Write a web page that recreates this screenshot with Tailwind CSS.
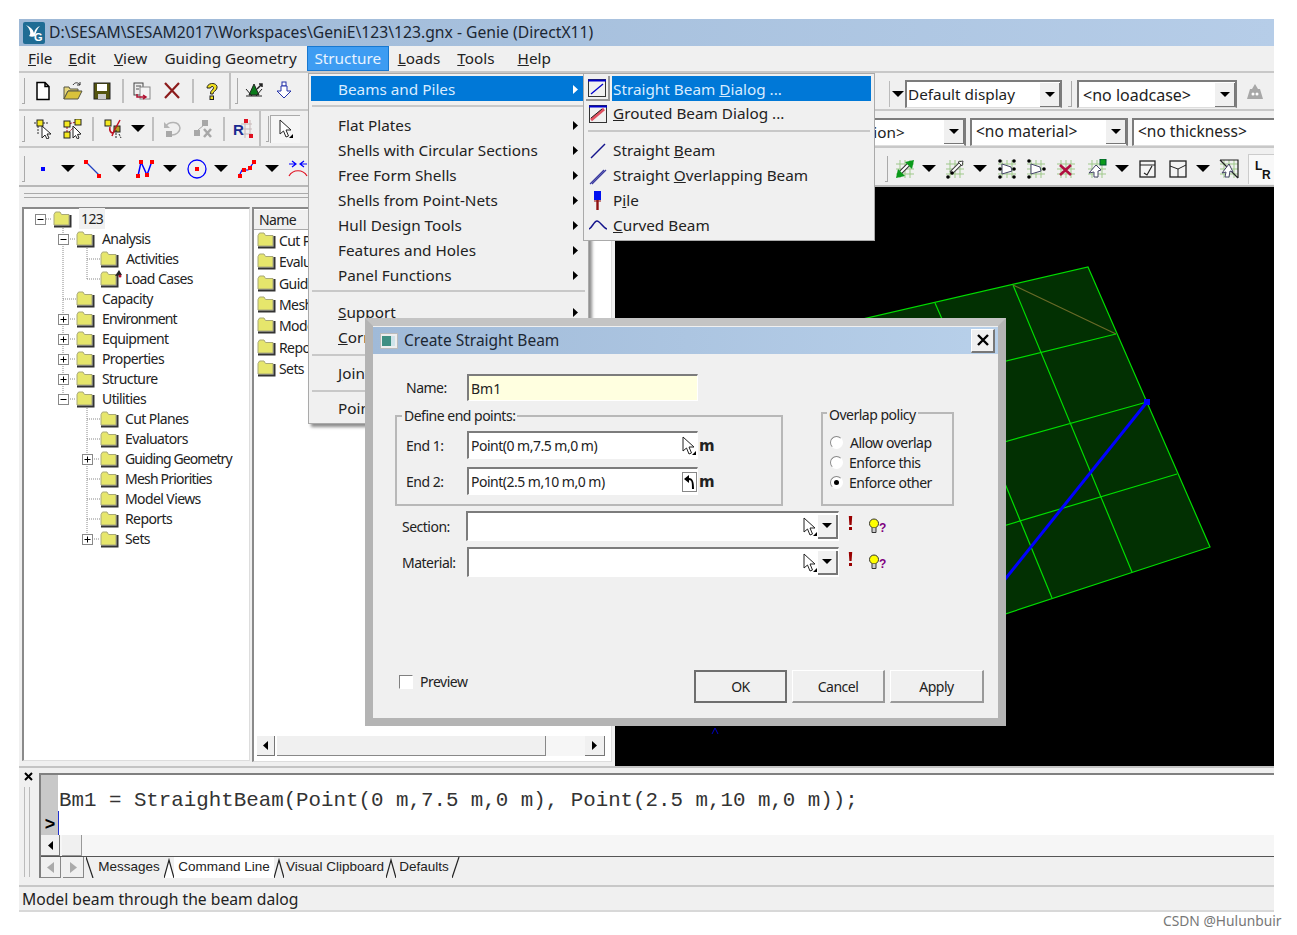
<!DOCTYPE html>
<html lang="en">
<head>
<meta charset="UTF-8">
<title>Genie</title>
<script src="https://cdn.jsdelivr.net/npm/@tailwindcss/browser@4"></script>
</head>
<body class="bg-white font-['Noto_Sans',sans-serif] text-[#222] text-[15.3px] relative h-[935px] w-[1297px] overflow-hidden">

<svg class="hidden">
  <symbol id="folder" viewBox="0 0 19 17">
    <path d="M1 3.5 2.5 1H7l1.5 2.5H16V14H1Z" fill="#e6e66c" stroke="#a8a878"/>
    <path d="M1 15.5H17.5V4" fill="none" stroke="#333" stroke-width="2"/>
  </symbol>
  <symbol id="plus" viewBox="0 0 11 11">
    <rect x=".5" y=".5" width="10" height="10" fill="#fff" stroke="#888"/>
    <path d="M2.5 5.5h6M5.5 2.5v6" stroke="#000"/>
  </symbol>
  <symbol id="minus" viewBox="0 0 11 11">
    <rect x=".5" y=".5" width="10" height="10" fill="#fff" stroke="#888"/>
    <path d="M2.5 5.5h6" stroke="#000"/>
  </symbol>
  <symbol id="dd" viewBox="0 0 14 7"><path d="M0 0H14L7 7Z" fill="#000"/></symbol>
  <symbol id="cursor" viewBox="0 0 16 20">
    <path d="M2 1V15L5.5 12 8 18 10.5 17 8 11H13Z" fill="#fff" stroke="#222"/>
    <path d="M15 15V19H11Z" fill="#000"/>
  </symbol>
  <symbol id="grid" viewBox="0 0 20 20">
    <path d="M1 5H19M1 10H19M1 15H19M5 1V19M10 1V19M15 1V19" stroke="#9fc98a"/>
  </symbol>
  <symbol id="bulb" viewBox="0 0 20 16">
    <circle cx="6" cy="5.5" r="4.5" fill="#ff0" stroke="#333"/>
    <path d="M4 10V14.5H8V10" fill="#ccc" stroke="#333"/>
    <text x="11" y="14" font-size="12" font-weight="700" fill="#800080" font-family="Liberation Sans">?</text>
  </symbol>
  <symbol id="bang" viewBox="0 0 5 15">
    <path d="M.8 0H4.2L3.6 9H1.4Z M1 11H4V14H1Z" fill="#900"/>
  </symbol>
</svg>

<div class="ml-[19px] mt-[19px] w-[1255px] h-[893px] flex flex-col bg-[#f0f0f0] relative overflow-hidden">

  <!-- title -->
  <div class="h-[27px] shrink-0 flex items-center bg-gradient-to-r from-[#9db8d6] to-[#b6cde8] pl-[4px] text-[15.7px]">
    <svg class="w-[22px] h-[22px]" viewBox="0 0 22 22"><rect width="22" height="22" rx="2" fill="#1f6c94"/><path d="M3 3C7 5 10 7 11 11 12 7 14 5 17 4 14 7 13 10 12 14 10 15 8 15 6 14 8 12 8 8 3 3Z" fill="#fff"/><text x="11" y="19" font-size="11" font-weight="700" fill="#fff" font-family="Liberation Sans">G</text></svg>
    <span class="ml-[4px] text-[#1c2733]">D:\SESAM\SESAM2017\Workspaces\GeniE\123\123.gnx - Genie (DirectX11)</span>
  </div>

  <!-- menu -->
  <div class="h-[27px] shrink-0 flex items-center border-b-2 border-[#c8c8c8]">
    <span class="ml-[9px]"><u>F</u>ile</span>
    <span class="ml-[16px]"><u>E</u>dit</span>
    <span class="ml-[18px]"><u>V</u>iew</span>
    <span class="ml-[17px]">Guiding Geometry</span>
    <span class="ml-[10px] h-[25px] w-[82px] flex items-center justify-center bg-[#3d9cf2] border border-[#1878d0] text-[#e8f3ff]">Structure</span>
    <span class="ml-[9px]"><u>L</u>oads</span>
    <span class="ml-[17px]"><u>T</u>ools</span>
    <span class="ml-[23px]"><u>H</u>elp</span>
  </div>

  <!-- toolbar 1 -->
  <div class="h-[38px] shrink-0 flex items-center border-b-2 border-[#c8c8c8]">
    <div class="ml-[3px] w-[3px] h-[26px] border-r border-b border-[#aaa]"></div>
    <svg class="ml-[8px] w-[20px] h-[20px]" viewBox="0 0 20 20"><path d="M4 1.5H12L16 5.5V18.5H4Z M12 1.5V5.5H16" fill="#fff" stroke="#000" stroke-width="1.5"/></svg>
    <svg class="ml-[10px] w-[20px] h-[20px]" viewBox="0 0 20 20"><path d="M1 6H6L7 8H15V10H5L1 18Z" fill="#e6d67a" stroke="#554"/><path d="M1 18 5 10H19L15 18Z" fill="#d8c23c" stroke="#554"/><path d="M10 4C12 1 15 1 17 4M17 1V4H14" fill="none" stroke="#333"/></svg>
    <svg class="ml-[9px] w-[20px] h-[20px]" viewBox="0 0 20 20"><rect x="2" y="2" width="16" height="16" fill="#55550f" stroke="#222"/><rect x="5" y="3" width="10" height="7" fill="#fff"/><rect x="6" y="13" width="8" height="5" fill="#ccc"/></svg>
    <div class="ml-[10px] w-[2px] h-[24px] bg-[#c0c0c0]"></div>
    <svg class="ml-[8px] w-[20px] h-[20px]" viewBox="0 0 20 20"><rect x="2" y="2" width="9" height="12" fill="#eee" stroke="#444"/><rect x="8" y="6" width="10" height="12" fill="#f4f4f4" stroke="#888"/><path d="M4 5H9M4 8H7" stroke="#555"/><path d="M5 13V16H13M11 14 14 16 11 18" fill="none" stroke="#b01030" stroke-width="1.5"/></svg>
    <svg class="ml-[10px] w-[20px] h-[20px]" viewBox="0 0 20 20"><path d="M3 2 17 17M17 2 3 17" stroke="#8c1c1c" stroke-width="2.2"/></svg>
    <div class="ml-[10px] w-[2px] h-[24px] bg-[#c0c0c0]"></div>
    <svg class="ml-[8px] w-[20px] h-[20px]" viewBox="0 0 20 20"><path d="M5 7C5 1 16 1 15 7 14.500 10 11 10 11 13H8.500C8 9 12 9 11.500 6.500 11 5 9 5 8.500 7Z" fill="#f0e020" stroke="#222"/><rect x="8" y="15" width="3.500" height="3.500" fill="#f0e020" stroke="#222"/></svg>
    <div class="ml-[7px] w-[2px] h-[36px] bg-[#c0c0c0]"></div>
    <div class="ml-[4px] w-[3px] h-[26px] border-r border-b border-[#aaa]"></div>
    <svg class="ml-[6px] w-[20px] h-[20px]" viewBox="0 0 20 20"><path d="M10 3 15 14H5Z" fill="#0a7a1a" stroke="#222"/><path d="M2 8 8 15M18 8 12 15M2 15H18" stroke="#222"/><path d="M13 8 18 3M15 3H18V6" stroke="#222" stroke-width="1.5" fill="none"/></svg>
    <svg class="ml-[10px] w-[20px] h-[20px]" viewBox="0 0 20 20"><rect x="8" y="1" width="4" height="4" fill="#fff" stroke="#2230a8"/><path d="M7 5H13V10H17L10 17 3 10H7Z" fill="#fff" stroke="#2230a8"/></svg>

    <div class="ml-auto mr-[9px] mt-[6px] flex items-center">
      <div class="w-[16px] h-[26px] flex items-center justify-center border-l border-[#bbb]"><svg class="w-[12px] h-[6px]"><use href="#dd"/></svg></div>
      <div class="w-[157px] h-[28px] flex items-center justify-between bg-white border-t-2 border-l-2 border-r-2 border-[#7c7c7c] border-b border-b-[#ddd]">
        <span class="pl-[1px]">Default display</span>
        <span class="w-[20px] h-[24px] flex items-center justify-center bg-[#f0f0f0] border-r border-b border-[#777]"><svg class="w-[10px] h-[5px]"><use href="#dd"/></svg></span>
      </div>
      <div class="ml-[6px] w-[4px] h-[26px] border-r border-b border-[#aaa]"></div>
      <div class="ml-[5px] w-[160px] h-[28px] flex items-center justify-between bg-white border-t-2 border-l-2 border-r-2 border-[#7c7c7c] border-b border-b-[#ddd]">
        <span class="pl-[4px] text-[16px]">&lt;no loadcase&gt;</span>
        <span class="w-[20px] h-[24px] flex items-center justify-center bg-[#f0f0f0] border-r border-b border-[#777]"><svg class="w-[10px] h-[5px]"><use href="#dd"/></svg></span>
      </div>
      <svg class="ml-[8px] -mt-[4px] w-[20px] h-[20px]" viewBox="0 0 20 20"><path d="M10 2 13 7H15L18 17H2L5 7H7Z" fill="#a8a8a8"/><circle cx="8" cy="12" r="1.500" fill="#fff"/><circle cx="12" cy="12" r="1.500" fill="#fff"/></svg>
    </div>
  </div>

  <!-- toolbar 2 -->
  <div class="h-[37px] shrink-0 flex items-center border-b-2 border-[#c8c8c8]">
    <div class="ml-[3px] w-[3px] h-[26px] border-r border-b border-[#aaa]"></div>
    <svg class="ml-[8px] w-[20px] h-[20px]" viewBox="0 0 20 20"><path d="M1 4H16M5 4V16" stroke="#333" stroke-dasharray="2 1"/><rect x="4" y="1" width="6" height="6" fill="#f4e820" stroke="#222"/><path d="M9 7V19L12 16 14 20 16 19 14 15H18Z" fill="#fff" stroke="#222"/></svg>
    <svg class="ml-[10px] w-[20px] h-[20px]" viewBox="0 0 20 20"><path d="M4 5 14 3M4 5V15M4 15 11 8" stroke="#b01020" stroke-dasharray="2 1"/><rect x="1" y="2" width="6" height="6" fill="#f4e820" stroke="#222"/><rect x="12" y="0" width="6" height="6" fill="#f4e820" stroke="#222"/><rect x="1" y="13" width="6" height="6" fill="#f4e820" stroke="#222"/><path d="M10 7V19L12.500 16.500 14.500 20 16 19 14.500 15.500 18 15Z" fill="#fff" stroke="#222"/></svg>
    <div class="ml-[9px] w-[2px] h-[24px] bg-[#c0c0c0]"></div>
    <svg class="ml-[10px] w-[20px] h-[20px]" viewBox="0 0 20 20"><rect x="1" y="1" width="6" height="6" fill="#f4e820" stroke="#222"/><rect x="10" y="7" width="6" height="6" fill="#b0a020" stroke="#222"/><path d="M16 1 10 12 8 17M6 8C5 12 7 14 9 14" fill="none" stroke="#c01020" stroke-width="1.500"/><path d="M12 11V19M15 15 17 19" stroke="#222" stroke-dasharray="2 1"/></svg>
    <svg class="ml-[7px] w-[14px] h-[7px]"><use href="#dd"/></svg>
    <div class="ml-[7px] w-[2px] h-[24px] bg-[#c0c0c0]"></div>
    <svg class="ml-[9px] w-[20px] h-[20px]" viewBox="0 0 20 20"><path d="M3 7C6 2 16 2 17 9 17 13 13 16 9 16" fill="none" stroke="#b4b4b4" stroke-width="1.500"/><path d="M1 3 7 9H1Z" fill="#b4b4b4"/><rect x="3" y="12" width="6" height="6" fill="#a8a8a8"/></svg>
    <svg class="ml-[10px] w-[20px] h-[20px]" viewBox="0 0 20 20"><rect x="9" y="1" width="6" height="6" fill="#a8a8a8"/><rect x="1" y="11" width="6" height="6" fill="#a8a8a8"/><path d="M5 11 11 6" stroke="#a8a8a8"/><path d="M11 10 18 18M18 10 11 18" stroke="#a8a8a8" stroke-width="2.500"/></svg>
    <div class="ml-[10px] w-[2px] h-[24px] bg-[#c0c0c0]"></div>
    <svg class="ml-[8px] w-[20px] h-[20px]" viewBox="0 0 20 20"><path d="M8 5H19M8 10H19M8 15H19M12 1V19M17 1V19" stroke="#c8b8b8"/><rect x="11" y="0" width="4" height="4" fill="#e01020"/><rect x="16" y="15" width="4" height="4" fill="#e01020"/><text x="0" y="16" font-size="15" font-weight="700" fill="#1a2a90" font-family="Liberation Sans">R</text></svg>
    <div class="ml-[6px] w-[2px] h-[35px] bg-[#c0c0c0]"></div>
    <div class="ml-[5px] w-[3px] h-[26px] border-r border-b border-[#aaa]"></div>
    <div class="ml-[1px] w-[30px] h-[28px] flex items-center justify-center bg-[#f6f6f6] border-t border-l border-[#aaa]"><svg class="w-[16px] h-[20px]"><use href="#cursor"/></svg></div>

    <div class="ml-auto mt-[6px] flex items-center">
      <div class="w-[157px] h-[28px] flex items-center justify-between bg-white border-t-2 border-l-2 border-r-2 border-[#7c7c7c] border-b border-b-[#ddd]">
        <span class="pl-[2px]">&lt;no section&gt;</span>
        <span class="w-[20px] h-[24px] flex items-center justify-center bg-[#f0f0f0] border-r border-b border-[#777]"><svg class="w-[10px] h-[5px]"><use href="#dd"/></svg></span>
      </div>
      <div class="ml-[4px] w-[158px] h-[28px] flex items-center justify-between bg-white border-t-2 border-l-2 border-r-2 border-[#7c7c7c] border-b border-b-[#ddd]">
        <span class="pl-[4px] text-[15.5px]">&lt;no material&gt;</span>
        <span class="w-[20px] h-[24px] flex items-center justify-center bg-[#f0f0f0] border-r border-b border-[#777]"><svg class="w-[10px] h-[5px]"><use href="#dd"/></svg></span>
      </div>
      <div class="ml-[4px] w-[142px] h-[28px] flex items-center bg-white border-t-2 border-l-2 border-[#7c7c7c] border-b border-b-[#ddd]">
        <span class="pl-[4px] text-[15.5px]">&lt;no thickness&gt;</span>
      </div>
    </div>
  </div>

  <!-- toolbar 3 -->
  <div class="h-[39px] shrink-0 flex items-center pt-[4px] border-b-2 border-[#b8b8b8]">
    <div class="ml-[3px] w-[3px] h-[26px] border-r border-b border-[#aaa]"></div>
    <svg class="ml-[8px] w-[20px] h-[20px]" viewBox="0 0 20 20"><rect x="8" y="8" width="4" height="4" fill="#00f"/></svg>
    <svg class="ml-[8px] w-[14px] h-[7px]"><use href="#dd"/></svg>
    <svg class="ml-[8px] w-[20px] h-[20px]" viewBox="0 0 20 20"><path d="M3 3 16 16" stroke="#2040c0" stroke-width="1.200"/><rect x="1" y="1" width="4" height="4" fill="#f00"/><rect x="14" y="15" width="4" height="4" fill="#f00"/></svg>
    <svg class="ml-[9px] w-[14px] h-[7px]"><use href="#dd"/></svg>
    <svg class="ml-[9px] w-[20px] h-[20px]" viewBox="0 0 20 20"><path d="M3 17 6 3 12 16 17 2" fill="none" stroke="#00f" stroke-width="1.500"/><rect x="1" y="15" width="4" height="4" fill="#f00"/><rect x="4" y="1" width="4" height="4" fill="#f00"/><rect x="10" y="14" width="4" height="4" fill="#f00"/><rect x="15" y="1" width="4" height="4" fill="#f00"/></svg>
    <svg class="ml-[8px] w-[14px] h-[7px]"><use href="#dd"/></svg>
    <svg class="ml-[10px] w-[20px] h-[20px]" viewBox="0 0 20 20"><circle cx="10" cy="10" r="9" fill="none" stroke="#00f" stroke-width="1.300"/><rect x="8" y="8" width="4" height="4" fill="#f00"/></svg>
    <svg class="ml-[7px] w-[14px] h-[7px]"><use href="#dd"/></svg>
    <svg class="ml-[9px] w-[20px] h-[20px]" viewBox="0 0 20 20"><path d="M2 17 5 11H11L17 3" fill="none" stroke="#00f" stroke-width="1.200"/><rect x="1" y="15" width="4" height="4" fill="#f00"/><rect x="5" y="9" width="4" height="4" fill="#f00"/><rect x="11" y="7" width="4" height="4" fill="#f00"/><rect x="15" y="1" width="4" height="4" fill="#f00"/></svg>
    <svg class="ml-[8px] w-[14px] h-[7px]"><use href="#dd"/></svg>
    <svg class="ml-[9px] w-[20px] h-[20px]" viewBox="0 0 20 20"><path d="M1 5H7M4 2 8 5 4 8M19 5H13M16 2 12 5 16 8" fill="none" stroke="#00f" stroke-width="1.200"/><path d="M1 17C5 10 15 10 19 17" fill="none" stroke="#e01020" stroke-width="1.200"/></svg>

    <div class="ml-auto flex items-center">
      <div class="w-[3px] h-[26px] border-r border-b border-[#aaa]"></div>
      <svg class="ml-[7px] w-[20px] h-[20px]" viewBox="0 0 20 20"><use href="#grid"/><path d="M5 14 14 5" stroke="#333" stroke-width="4"/><path d="M5 14 14 5" stroke="#fff" stroke-width="2"/><path d="M1 19 3 10 10 17Z" fill="#0a9a1a"/><path d="M19 1 17 10 10 3Z" fill="#0a9a1a"/></svg>
      <svg class="ml-[7px] w-[14px] h-[7px]"><use href="#dd"/></svg>
      <svg class="ml-[9px] w-[20px] h-[20px]" viewBox="0 0 20 20"><use href="#grid"/><path d="M6 14 15 5" stroke="#444" stroke-width="4"/><path d="M6 14 15 5" stroke="#fff" stroke-width="2"/><path d="M18 2 13 3 17 7Z" fill="#fff" stroke="#444"/><circle cx="3" cy="18" r="1.800"/><circle cx="7" cy="14" r="1.800"/></svg>
      <svg class="ml-[8px] w-[14px] h-[7px]"><use href="#dd"/></svg>
      <svg class="ml-[10px] w-[20px] h-[20px]" viewBox="0 0 20 20"><use href="#grid"/><path d="M5 5 14 8 15 12 5 15Z" fill="#fff" stroke="#446"/><circle cx="3" cy="2" r="1.800"/><circle cx="17" cy="2" r="1.800"/><circle cx="3" cy="10" r="1.800"/><circle cx="17" cy="10" r="1.800"/><circle cx="3" cy="18" r="1.800"/><circle cx="17" cy="18" r="1.800"/></svg>
      <svg class="ml-[9px] w-[20px] h-[20px]" viewBox="0 0 20 20"><use href="#grid"/><path d="M5 5 14 8 15 12 5 15Z" fill="#fff" stroke="#446"/><circle cx="3" cy="2" r="1.800"/><circle cx="3" cy="18" r="1.800"/><circle cx="18" cy="10" r="1.800"/></svg>
      <svg class="ml-[10px] w-[20px] h-[20px]" viewBox="0 0 20 20"><use href="#grid"/><path d="M4 6 15 16M15 6 4 16" stroke="#b01040" stroke-width="2.600"/></svg>
      <svg class="ml-[11px] w-[20px] h-[20px]" viewBox="0 0 20 20"><use href="#grid"/><path d="M9 6 14 11 11 12 11 18 7 18 7 13 2 14Z" fill="#fff" stroke="#446"/><rect x="13" y="0" width="6" height="6" fill="#0a9a1a" stroke="#053"/></svg>
      <svg class="ml-[8px] w-[14px] h-[7px]"><use href="#dd"/></svg>
      <svg class="ml-[9px] w-[20px] h-[20px]" viewBox="0 0 20 20"><rect x="2" y="2" width="15" height="16" fill="#f4f4f4" stroke="#222" stroke-width="1.300"/><path d="M2 6H17M6 14 9 16 14 7" fill="none" stroke="#222" stroke-width="1.200"/></svg>
      <svg class="ml-[10px] w-[20px] h-[20px]" viewBox="0 0 20 20"><rect x="2" y="2" width="16" height="16" fill="#f4f4f4" stroke="#222" stroke-width="1.300"/><path d="M2 7 10 10 18 6M10 10V18" fill="none" stroke="#222"/></svg>
      <svg class="ml-[8px] w-[14px] h-[7px]"><use href="#dd"/></svg>
      <svg class="ml-[9px] w-[20px] h-[20px]" viewBox="0 0 20 20"><use href="#grid"/><path d="M1 1H19V19M1 1 19 19" fill="none" stroke="#222" stroke-width="1.200"/><path d="M10 5 14 13 11 12 10 18 6 18 7 13 3 14Z" fill="#fff" stroke="#446"/></svg>
      <div class="ml-[9px] w-[26px] h-[30px] bg-[#f8f8f8] border-t border-l border-[#ccc] font-['Liberation_Sans'] font-bold text-[#111] text-[12px] leading-none"><span class="block pl-[6px] pt-[5px]">L</span><span class="block pl-[13px] -mt-[3px]">R</span></div>
    </div>
  </div>

  <!-- main -->
  <div class="h-[579px] shrink-0 flex">
    <div class="w-[596px] shrink-0 flex flex-col">
      <div class="h-[20px] shrink-0 flex flex-col justify-center pl-[5px] pb-[3px]"><div class="h-[5px] border-y border-[#aaa]"></div></div>
      <div class="flex gap-[2px] pl-[3px]">
        <!-- tree -->
        <div class="w-[228px] h-[554px] bg-white border-t-2 border-l-2 border-[#8a8a8a] border-r border-b border-r-[#ddd] border-b-[#ddd] relative text-[14px] tracking-[-0.6px]">
          <svg class="absolute left-0 top-0 w-[226px] h-[552px]" viewBox="24 209 226 552" fill="none" stroke="#888" stroke-dasharray="1 1">
            <path d="M46 219H52M63 226V399M68 239H76M63 299H76M68 319H76M68 339H76M68 359H76M68 379H76M68 399H76"/>
            <path d="M87 246V279M87 259H100M87 279H100M87 406V539M87 419H100M87 439H100M92 459H100M87 479H100M87 499H100M87 519H100M92 539H100"/>
          </svg>
          <div class="relative [&_span]:-mt-[2px]">
            <div class="flex h-[20px] items-center pl-[11px]"><svg class="w-[11px] h-[11px]"><use href="#minus"/></svg><svg class="ml-[7px] w-[19px] h-[17px]"><use href="#folder"/></svg><span class="ml-[7px] px-[2px] bg-[#f0f0f0]">123</span></div>
            <div class="flex h-[20px] items-center pl-[34px]"><svg class="w-[11px] h-[11px]"><use href="#minus"/></svg><svg class="ml-[7px] w-[19px] h-[17px]"><use href="#folder"/></svg><span class="ml-[7px]">Analysis</span></div>
            <div class="flex h-[20px] items-center pl-[76px]"><svg class="w-[19px] h-[17px]"><use href="#folder"/></svg><span class="ml-[7px]">Activities</span></div>
            <div class="flex h-[20px] items-center pl-[76px] relative"><svg class="w-[19px] h-[17px]"><use href="#folder"/></svg><svg class="absolute left-[90px] top-0 w-[9px] h-[9px]" viewBox="0 0 9 9"><path d="M1 7 5 1 8 6Z" fill="#222"/><circle cx="6" cy="7" r="1.500" fill="#b01030"/></svg><span class="ml-[6px]">Load Cases</span></div>
            <div class="flex h-[20px] items-center pl-[52px]"><svg class="w-[19px] h-[17px]"><use href="#folder"/></svg><span class="ml-[7px]">Capacity</span></div>
            <div class="flex h-[20px] items-center pl-[34px]"><svg class="w-[11px] h-[11px]"><use href="#plus"/></svg><svg class="ml-[7px] w-[19px] h-[17px]"><use href="#folder"/></svg><span class="ml-[7px] tracking-[-0.9px]">Environment</span></div>
            <div class="flex h-[20px] items-center pl-[34px]"><svg class="w-[11px] h-[11px]"><use href="#plus"/></svg><svg class="ml-[7px] w-[19px] h-[17px]"><use href="#folder"/></svg><span class="ml-[7px]">Equipment</span></div>
            <div class="flex h-[20px] items-center pl-[34px]"><svg class="w-[11px] h-[11px]"><use href="#plus"/></svg><svg class="ml-[7px] w-[19px] h-[17px]"><use href="#folder"/></svg><span class="ml-[7px]">Properties</span></div>
            <div class="flex h-[20px] items-center pl-[34px]"><svg class="w-[11px] h-[11px]"><use href="#plus"/></svg><svg class="ml-[7px] w-[19px] h-[17px]"><use href="#folder"/></svg><span class="ml-[7px]">Structure</span></div>
            <div class="flex h-[20px] items-center pl-[34px]"><svg class="w-[11px] h-[11px]"><use href="#minus"/></svg><svg class="ml-[7px] w-[19px] h-[17px]"><use href="#folder"/></svg><span class="ml-[7px]">Utilities</span></div>
            <div class="flex h-[20px] items-center pl-[76px]"><svg class="w-[19px] h-[17px]"><use href="#folder"/></svg><span class="ml-[6px]">Cut Planes</span></div>
            <div class="flex h-[20px] items-center pl-[76px]"><svg class="w-[19px] h-[17px]"><use href="#folder"/></svg><span class="ml-[6px]">Evaluators</span></div>
            <div class="flex h-[20px] items-center pl-[58px]"><svg class="w-[11px] h-[11px]"><use href="#plus"/></svg><svg class="ml-[7px] w-[19px] h-[17px]"><use href="#folder"/></svg><span class="ml-[6px] tracking-[-0.9px]">Guiding Geometry</span></div>
            <div class="flex h-[20px] items-center pl-[76px]"><svg class="w-[19px] h-[17px]"><use href="#folder"/></svg><span class="ml-[6px] tracking-[-0.8px]">Mesh Priorities</span></div>
            <div class="flex h-[20px] items-center pl-[76px]"><svg class="w-[19px] h-[17px]"><use href="#folder"/></svg><span class="ml-[6px]">Model Views</span></div>
            <div class="flex h-[20px] items-center pl-[76px]"><svg class="w-[19px] h-[17px]"><use href="#folder"/></svg><span class="ml-[6px]">Reports</span></div>
            <div class="flex h-[20px] items-center pl-[58px]"><svg class="w-[11px] h-[11px]"><use href="#plus"/></svg><svg class="ml-[7px] w-[19px] h-[17px]"><use href="#folder"/></svg><span class="ml-[6px]">Sets</span></div>
          </div>
        </div>
        <!-- list -->
        <div class="w-[360px] h-[555px] bg-white border-t-2 border-l-2 border-[#8a8a8a] border-r border-b border-r-[#ddd] border-b-[#ddd] flex flex-col text-[14px] tracking-[-0.6px]">
          <div class="h-[20px] shrink-0 flex items-center pl-[5px] mt-[1px] bg-[#f0f0f0] border-b border-[#aaa]">Name</div>
          <div class="flex-1">
            <div class="flex h-[21.33px] items-center pl-[3px]"><svg class="w-[19px] h-[17px]"><use href="#folder"/></svg><span class="ml-[3px]">Cut Planes</span></div>
            <div class="flex h-[21.33px] items-center pl-[3px]"><svg class="w-[19px] h-[17px]"><use href="#folder"/></svg><span class="ml-[3px]">Evaluators</span></div>
            <div class="flex h-[21.33px] items-center pl-[3px]"><svg class="w-[19px] h-[17px]"><use href="#folder"/></svg><span class="ml-[3px]">Guiding Geometry</span></div>
            <div class="flex h-[21.33px] items-center pl-[3px]"><svg class="w-[19px] h-[17px]"><use href="#folder"/></svg><span class="ml-[3px]">Mesh Priorities</span></div>
            <div class="flex h-[21.33px] items-center pl-[3px]"><svg class="w-[19px] h-[17px]"><use href="#folder"/></svg><span class="ml-[3px]">Model Views</span></div>
            <div class="flex h-[21.33px] items-center pl-[3px]"><svg class="w-[19px] h-[17px]"><use href="#folder"/></svg><span class="ml-[3px]">Reports</span></div>
            <div class="flex h-[21.33px] items-center pl-[3px]"><svg class="w-[19px] h-[17px]"><use href="#folder"/></svg><span class="ml-[3px]">Sets</span></div>
          </div>
          <div class="h-[22px] mb-[4px] shrink-0 flex items-center pl-[3px] pr-[6px]">
            <div class="w-[18px] h-[20px] bg-[#f0f0f0] border-r border-b border-[#777] flex items-center justify-center"><svg class="w-[5px] h-[9px]" viewBox="0 0 5 9"><path d="M5 0V9L0 4.500Z"/></svg></div>
            <div class="ml-[2px] w-[269px] h-[20px] bg-[#f0f0f0] border-r border-b border-[#888]"></div>
            <div class="flex-1 h-[20px] bg-[#f6f6f6]"></div>
            <div class="w-[20px] h-[20px] bg-[#f0f0f0] border-r border-b border-[#777] flex items-center justify-center"><svg class="w-[5px] h-[9px]" viewBox="0 0 5 9"><path d="M0 0V9L5 4.500Z"/></svg></div>
          </div>
        </div>
      </div>
    </div>
    <!-- viewport -->
    <svg class="flex-1 h-[579px] bg-black" viewBox="615 187 659 579">
      <path d="M1088 267 1210 547 990 619 850 322Z" fill="#023002" stroke="#00dd00" stroke-width="1.200"/>
      <g stroke="#00dd00" stroke-width="1.200">
        <path d="M935 303 960 360M1013 285 1132 572M990 447 1052 598M1116 334 990 365M1147 402 990 446M1177 474 990 530"/>
      </g>
      <path d="M1013 285 1116 334" stroke="#6a6a28" stroke-width="1.200"/>
      <path d="M1147 402 990 598" stroke="#0000ff" stroke-width="3"/>
      <rect x="1144" y="399" width="6" height="6" fill="#0000ff"/>
      <path d="M712 734 715 728 718 734" fill="none" stroke="#0000c0"/>
    </svg>
  </div>

  <!-- command pane -->
  <div class="h-[119px] shrink-0 flex border-t-2 border-[#c4c4c4]">
    <div class="w-[20px] shrink-0 flex flex-col items-center pt-[4px]">
      <svg class="w-[9px] h-[9px] -ml-[2px]" viewBox="0 0 9 9"><path d="M1 1 8 8M8 1 1 8" stroke="#000" stroke-width="2"/></svg>
      <div class="mt-[6px] w-[6px] h-[90px] -ml-[4px] border-x border-[#bbb]"></div>
    </div>
    <div class="flex-1 flex flex-col mt-[5px] border-t-2 border-l-2 border-[#808080] h-[105px]">
      <div class="h-[60px] shrink-0 flex bg-white">
        <div class="w-[17px] shrink-0 bg-[#c8c8c8] font-['Liberation_Sans'] font-bold text-[18px] text-[#000] flex items-end justify-center leading-none pb-[2px] pl-[1px]">&gt;</div>
        <div class="relative flex-1 font-['Liberation_Mono'] text-[20.8px] text-[#333] leading-none pt-[16px] pl-[1px]">
          Bm1 = StraightBeam(Point(0 m,7.5 m,0 m), Point(2.5 m,10 m,0 m));
          <div class="absolute left-0 bottom-0 w-px h-[24px] bg-[#2030d0]"></div>
        </div>
      </div>
      <div class="h-[21px] shrink-0 flex bg-[#f6f6f6]">
        <div class="w-[19px] bg-[#f0f0f0] border-r border-b border-[#777] flex items-center justify-center"><svg class="w-[5px] h-[9px]" viewBox="0 0 5 9"><path d="M5 0V9L0 4.500Z"/></svg></div>
        <div class="ml-[2px] w-[20px] bg-[#f0f0f0] border-r border-b border-[#999]"></div>
      </div>
      <div class="h-[22px] shrink-0 flex items-stretch border-t border-[#555] font-['Liberation_Sans'] text-[13.5px] text-[#222]">
        <div class="w-[20px] bg-[#f0f0f0] border-r border-b border-[#888] flex items-center justify-center"><svg class="w-[7px] h-[11px]" viewBox="0 0 7 11"><path d="M7 0V11L0 5.500Z" fill="#aaa"/></svg></div>
        <div class="ml-[2px] w-[21px] bg-[#f0f0f0] border-r border-b border-[#888] flex items-center justify-center"><svg class="w-[7px] h-[11px]" viewBox="0 0 7 11"><path d="M0 0V11L7 5.500Z" fill="#aaa"/></svg></div>
        <svg class="ml-[2px] w-[8px] h-[21px] shrink-0" viewBox="0 0 8 21"><path d="M0 0 7 21" stroke="#222" stroke-width="1.200"/></svg>
        <div class="w-[70px] flex items-center justify-center">Messages</div>
        <svg class="w-[10px] h-[21px] shrink-0" viewBox="0 0 10 21"><path d="M0 21 5 3 10 21" fill="#fff" stroke="#222" stroke-width="1.200"/></svg>
        <div class="w-[100px] flex items-center justify-center bg-white">Command Line</div>
        <svg class="w-[10px] h-[21px] shrink-0" viewBox="0 0 10 21"><path d="M0 21 5 3 10 21" fill="none" stroke="#222" stroke-width="1.200"/></svg>
        <div class="w-[102px] flex items-center justify-center">Visual Clipboard</div>
        <svg class="w-[10px] h-[21px] shrink-0" viewBox="0 0 10 21"><path d="M0 21 5 3 10 21" fill="none" stroke="#222" stroke-width="1.200"/></svg>
        <div class="w-[56px] flex items-center justify-center">Defaults</div>
        <svg class="w-[8px] h-[21px] shrink-0" viewBox="0 0 8 21"><path d="M7 0 0 21" stroke="#222" stroke-width="1.200"/></svg>
      </div>
    </div>
  </div>

  <!-- status -->
  <div class="h-[27px] shrink-0 flex items-center pl-[3px] pt-[3px] text-[15.7px] border-t-2 border-b-2 border-t-[#c8c8c8] border-b-[#d8d8d8]">Model beam through the beam dalog</div>

  <!-- structure menu -->
  <div class="absolute left-[289px] top-[54px] w-[281px] h-[351px] bg-[#f0f0f0] border border-[#aaa] shadow-[3px_3px_3px_rgba(0,0,0,0.45)] px-[2px] pt-[2px]">
    <div class="h-[25px] flex items-center justify-between bg-[#0078d7] text-[#d8ecff] pl-[27px] pr-[8px] pt-[1px]">Beams and Piles<svg class="w-[5px] h-[9px]" viewBox="0 0 5 9"><path d="M0 0V9L5 4.500Z" fill="#fff"/></svg></div>
    <div class="mx-[1px] mt-[4px] border-t-2 border-[#c8c8c8]"></div>
    <div class="mt-[6px] h-[25px] flex items-center justify-between pl-[27px] pr-[8px]">Flat Plates<svg class="w-[5px] h-[9px]" viewBox="0 0 5 9"><path d="M0 0V9L5 4.500Z"/></svg></div>
    <div class="h-[25px] flex items-center justify-between pl-[27px] pr-[8px]">Shells with Circular Sections<svg class="w-[5px] h-[9px]" viewBox="0 0 5 9"><path d="M0 0V9L5 4.500Z"/></svg></div>
    <div class="h-[25px] flex items-center justify-between pl-[27px] pr-[8px]">Free Form Shells<svg class="w-[5px] h-[9px]" viewBox="0 0 5 9"><path d="M0 0V9L5 4.500Z"/></svg></div>
    <div class="h-[25px] flex items-center justify-between pl-[27px] pr-[8px]">Shells from Point-Nets<svg class="w-[5px] h-[9px]" viewBox="0 0 5 9"><path d="M0 0V9L5 4.500Z"/></svg></div>
    <div class="h-[25px] flex items-center justify-between pl-[27px] pr-[8px]">Hull Design Tools<svg class="w-[5px] h-[9px]" viewBox="0 0 5 9"><path d="M0 0V9L5 4.500Z"/></svg></div>
    <div class="h-[25px] flex items-center justify-between pl-[27px] pr-[8px]">Features and Holes<svg class="w-[5px] h-[9px]" viewBox="0 0 5 9"><path d="M0 0V9L5 4.500Z"/></svg></div>
    <div class="h-[25px] flex items-center justify-between pl-[27px] pr-[8px]">Panel Functions<svg class="w-[5px] h-[9px]" viewBox="0 0 5 9"><path d="M0 0V9L5 4.500Z"/></svg></div>
    <div class="mx-[1px] mt-[2px] border-t-2 border-[#c8c8c8]"></div>
    <div class="mt-[8px] h-[25px] flex items-center justify-between pl-[27px] pr-[8px]"><span><u>S</u>upport</span><svg class="w-[5px] h-[9px]" viewBox="0 0 5 9"><path d="M0 0V9L5 4.500Z"/></svg></div>
    <div class="h-[25px] flex items-center pl-[27px]"><u>C</u>orrosion</div>
    <div class="mx-[1px] mt-[4px] mb-[5px] border-t-2 border-[#c8c8c8]"></div>
    <div class="h-[25px] flex items-center pl-[27px]"><u>J</u>oints</div>
    <div class="mx-[1px] my-[4px] border-t-2 border-[#c8c8c8]"></div>
    <div class="h-[25px] flex items-center pl-[27px]">Points</div>
  </div>

  <!-- beams submenu -->
  <div class="absolute left-[564px] top-[54px] w-[292px] h-[168px] bg-[#f0f0f0] border border-[#aaa] px-[2px] pt-[2px]">
    <div class="h-[25px] flex items-stretch">
      <div class="w-[24px] flex items-center justify-center border-r-2 border-b-2 border-[#999] bg-[#f0f0f0]"><svg class="w-[18px] h-[18px]" viewBox="0 0 18 18"><rect x=".5" y=".5" width="17" height="17" fill="#f0f0f0" stroke="#333"/><path d="M0 1.500H18" stroke="#00c" stroke-width="2"/><path d="M3 15 15 5" stroke="#00c" stroke-width="1.300"/></svg></div>
      <div class="flex-1 ml-[2px] mr-[1px] flex items-center pl-[1px] pt-[1px] bg-[#0078d7] text-[#d8ecff]"><span>Straight Beam <u>D</u>ialog ...</span></div>
    </div>
    <div class="h-[25px] flex items-center">
      <svg class="ml-[3px] w-[18px] h-[18px]" viewBox="0 0 18 18"><rect x=".5" y=".5" width="17" height="17" fill="#f0f0f0" stroke="#333"/><path d="M0 1.500H18" stroke="#00c" stroke-width="2"/><path d="M2 15 15 4" stroke="#e05060" stroke-width="3"/><path d="M2 13 13 4" stroke="#222"/></svg>
      <span class="ml-[6px]"><u>G</u>routed Beam Dialog ...</span>
    </div>
    <div class="mx-[2px] my-[4px] border-t-2 border-[#c8c8c8]"></div>
    <div class="mt-[6px] h-[25px] flex items-center">
      <svg class="ml-[3px] w-[18px] h-[18px]" viewBox="0 0 18 18"><path d="M2 16 16 2" stroke="#14148c" stroke-width="1.400"/></svg>
      <span class="ml-[6px]">Straight <u>B</u>eam</span>
    </div>
    <div class="h-[25px] flex items-center">
      <svg class="ml-[3px] w-[18px] h-[18px]" viewBox="0 0 18 18"><path d="M1 17 15 3M3 17 17 3" stroke="#3a3aa0" stroke-width="1.200"/></svg>
      <span class="ml-[6px]">Straight <u>O</u>verlapping Beam</span>
    </div>
    <div class="h-[25px] flex items-center">
      <svg class="ml-[3px] w-[18px] h-[22px]" viewBox="0 0 18 22"><rect x="5" y="1" width="7" height="9" fill="#0010f0"/><path d="M8.500 10V20" stroke="#901010" stroke-width="2.400"/><path d="M5 11H12" stroke="#901010"/></svg>
      <span class="ml-[6px]">P<u>i</u>le</span>
    </div>
    <div class="h-[25px] flex items-center">
      <svg class="ml-[3px] w-[18px] h-[18px]" viewBox="0 0 18 18"><path d="M0 12C3 11 5 4 8 4 11 4 14 11 18 12" fill="none" stroke="#14148c" stroke-width="1.500"/></svg>
      <span class="ml-[6px]"><u>C</u>urved Beam</span>
    </div>
  </div>

  <!-- dialog -->
  <div class="absolute left-[346px] top-[299px] w-[641px] h-[408px] bg-[#f0f0f0] border-[8px] border-[#b4b4b4] border-t-[#c4c4c4] flex flex-col text-[14px] tracking-[-0.5px]">
    <div class="h-[27px] mt-[1px] shrink-0 flex items-center justify-between bg-gradient-to-r from-[#a0bad8] to-[#b8d0ea] pl-[7px] pr-[3px] text-[15.5px] tracking-normal text-[#1c2733]">
      <div class="flex items-center"><svg class="w-[18px] h-[16px]" viewBox="0 0 18 16"><rect x=".5" y=".5" width="17" height="15" fill="#eee" stroke="#bbb"/><rect x="2" y="3" width="9" height="10" fill="#3f8f82"/><rect x="11" y="3" width="4" height="10" fill="#cfe3ea"/></svg><span class="ml-[6px]">Create Straight Beam</span></div>
      <div class="w-[24px] h-[24px] flex items-center justify-center bg-[#f0f0f0] border-r-2 border-b-2 border-[#777] border-t border-l border-t-white border-l-white"><svg class="w-[12px] h-[12px]" viewBox="0 0 12 12"><path d="M1 1 11 11M11 1 1 11" stroke="#000" stroke-width="2.400"/></svg></div>
    </div>

    <div class="flex-1 flex flex-col pl-[22px] pr-[14px]">
      <div class="mt-[20px] h-[27px] flex items-center">
        <span class="ml-[11px] w-[61px]">Name:</span>
        <div class="w-[231px] h-[27px] flex items-center pl-[2px] tracking-normal bg-[#ffffe0] border-t-2 border-l-2 border-[#7c7c7c] border-r border-b border-r-white border-b-white">Bm1</div>
      </div>

      <div class="flex mt-[6px] items-start">
        <fieldset class="w-[388px] h-[99px] border-2 border-[#b8b8b8] pl-[9px]">
          <legend class="-ml-[4px] px-[2px] leading-[18px]">Define end points:</legend>
          <div class="mt-[6px] h-[28px] flex items-center">
            <span class="w-[61px]">End 1:</span>
            <div class="w-[231px] h-[28px] flex items-center justify-between pl-[2px] bg-white border-t-2 border-l-2 border-[#7c7c7c] border-r border-b border-r-white border-b-white">Point(0 m,7.5 m,0 m)<svg class="w-[16px] h-[20px]"><use href="#cursor"/></svg></div>
            <span class="ml-[1px] mt-[3px] font-['DejaVu_Sans'] font-bold text-[15px] tracking-normal">m</span>
          </div>
          <div class="mt-[8px] h-[28px] flex items-center">
            <span class="w-[61px]">End 2:</span>
            <div class="w-[231px] h-[28px] flex items-center justify-between pl-[2px] bg-white border-t-2 border-l-2 border-[#7c7c7c] border-r border-b border-r-white border-b-white">Point(2.5 m,10 m,0 m)<span class="w-[15px] h-[20px] flex items-center justify-center border border-[#888]"><svg class="w-[11px] h-[14px]" viewBox="0 0 11 14"><path d="M5 0 0 4 5 8V5C8 5 8 8 8 14H10C10 7 9 3 5 3Z"/></svg></span></div>
            <span class="ml-[1px] mt-[3px] font-['DejaVu_Sans'] font-bold text-[15px] tracking-normal">m</span>
          </div>
        </fieldset>
        <fieldset class="ml-[38px] -mt-[5px] w-[133px] h-[104px] border-2 border-[#b8b8b8] pl-[7px]">
          <legend class="-ml-[3px] px-[2px] pt-[4px] leading-[18px]">Overlap policy</legend>
          <div class="mt-[8px] h-[20px] flex items-center"><span class="w-[13px] h-[13px] rounded-full bg-white border border-t-[#888] border-l-[#888] border-r-white border-b-white"></span><span class="ml-[7px]">Allow overlap</span></div>
          <div class="h-[20px] flex items-center"><span class="w-[13px] h-[13px] rounded-full bg-white border border-t-[#888] border-l-[#888] border-r-white border-b-white"></span><span class="ml-[6px]">Enforce this</span></div>
          <div class="h-[20px] flex items-center"><span class="w-[13px] h-[13px] rounded-full bg-white border border-t-[#888] border-l-[#888] border-r-white border-b-white flex items-center justify-center"><span class="w-[5px] h-[5px] rounded-full bg-black"></span></span><span class="ml-[6px]">Enforce other</span></div>
        </fieldset>
      </div>

      <div class="mt-[5px] h-[30px] flex items-center">
        <span class="ml-[7px] w-[64px]">Section:</span>
        <div class="w-[373px] h-[30px] flex items-center justify-end bg-white border-t-2 border-l-2 border-[#7c7c7c] border-r border-b border-r-white border-b-white">
          <svg class="w-[16px] h-[20px]"><use href="#cursor"/></svg>
          <span class="w-[20px] h-[24px] flex items-center justify-center bg-[#f0f0f0] border-r-2 border-b-2 border-[#777]"><svg class="w-[10px] h-[5px]"><use href="#dd"/></svg></span>
        </div>
        <svg class="ml-[9px] -mt-[6px] w-[5px] h-[15px]"><use href="#bang"/></svg>
        <svg class="ml-[15px] w-[20px] h-[16px]"><use href="#bulb"/></svg>
      </div>
      <div class="mt-[6px] h-[30px] flex items-center">
        <span class="ml-[7px] w-[65px]">Material:</span>
        <div class="w-[372px] h-[30px] flex items-center justify-end bg-white border-t-2 border-l-2 border-[#7c7c7c] border-r border-b border-r-white border-b-white">
          <svg class="w-[16px] h-[20px]"><use href="#cursor"/></svg>
          <span class="w-[20px] h-[24px] flex items-center justify-center bg-[#f0f0f0] border-r-2 border-b-2 border-[#777]"><svg class="w-[10px] h-[5px]"><use href="#dd"/></svg></span>
        </div>
        <svg class="ml-[9px] -mt-[6px] w-[5px] h-[15px]"><use href="#bang"/></svg>
        <svg class="ml-[15px] w-[20px] h-[16px]"><use href="#bulb"/></svg>
      </div>

      <div class="mt-[93px] flex items-start">
        <div class="mt-[1px] flex items-center">
          <span class="ml-[4px] w-[14px] h-[14px] bg-white border border-t-[#808080] border-l-[#808080] border-r-white border-b-white"></span>
          <span class="ml-[7px]">Preview</span>
        </div>
        <div class="ml-auto flex gap-[5px]">
          <div class="w-[93px] h-[33px] flex items-center justify-center bg-[#f0f0f0] border-2 border-[#6e6e6e]">OK</div>
          <div class="w-[93px] h-[33px] flex items-center justify-center bg-[#f0f0f0] border-t border-l border-white border-r-2 border-b-2 border-r-[#999] border-b-[#999]">Cancel</div>
          <div class="w-[94px] h-[33px] flex items-center justify-center bg-[#f0f0f0] border-t border-l border-white border-r-2 border-b-2 border-r-[#999] border-b-[#999]">Apply</div>
        </div>
      </div>
    </div>
  </div>
</div>

<div class="absolute left-[1163px] top-[911px] text-[13.8px] text-[#777]">CSDN @Hulunbuir</div>
</body>
</html>
